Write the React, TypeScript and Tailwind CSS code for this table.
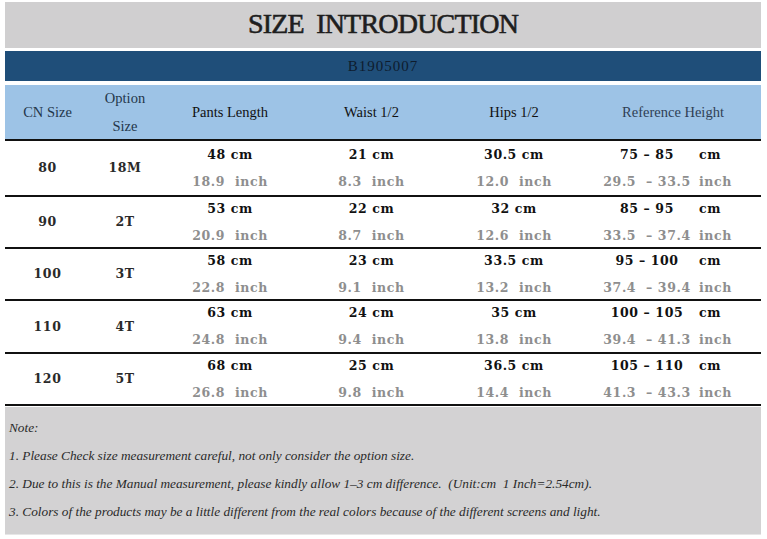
import React from 'react';

interface Row {
  cn: string;
  opt: string;
  h: string;
  pants: [string, string];
  waist: [string, string];
  hips: [string, string];
  height: [string, string, string, string];
}

const rows: Row[] = [
  { cn: '80', opt: '18M', h: 'h-[56px]', pants: ['48 cm', '18.9  inch'], waist: ['21 cm', '8.3  inch'], hips: ['30.5 cm', '12.0  inch'], height: ['75 – 85', 'cm', '29.5  – 33.5', 'inch'] },
  { cn: '90', opt: '2T', h: 'h-[52px]', pants: ['53 cm', '20.9  inch'], waist: ['22 cm', '8.7  inch'], hips: ['32 cm', '12.6  inch'], height: ['85 – 95', 'cm', '33.5  – 37.4', 'inch'] },
  { cn: '100', opt: '3T', h: 'h-[52px]', pants: ['58 cm', '22.8  inch'], waist: ['23 cm', '9.1  inch'], hips: ['33.5 cm', '13.2  inch'], height: ['95 – 100', 'cm', '37.4  – 39.4', 'inch'] },
  { cn: '110', opt: '4T', h: 'h-[53px]', pants: ['63 cm', '24.8  inch'], waist: ['24 cm', '9.4  inch'], hips: ['35 cm', '13.8  inch'], height: ['100 – 105', 'cm', '39.4  – 41.3', 'inch'] },
  { cn: '120', opt: '5T', h: 'h-[52px]', pants: ['68 cm', '26.8  inch'], waist: ['25 cm', '9.8  inch'], hips: ['36.5 cm', '14.4  inch'], height: ['105 – 110', 'cm', '41.3  – 43.3', 'inch'] },
];

const cols = 'grid grid-cols-[85px_70px_140px_143px_142px_176px]';

const Pair: React.FC<{ v: [string, string] }> = ({ v }) => (
  <div className="flex flex-col items-center justify-center gap-[11px] whitespace-pre">
    <span className="text-[#111]">{v[0]}</span>
    <span className="text-[#8e8e8e]">{v[1]}</span>
  </div>
);

export default function App() {
  return (
    <div className="w-[767px] h-[539px] bg-white pt-[2px] px-[5px] overflow-hidden">
      <div className="w-[756px]">
        {/* Title */}
        <div className="h-[46px] bg-[#d0cfd0] flex items-center justify-center">
          <h1 className="font-['Liberation_Serif',serif] text-[28px] leading-none text-[#1e1e1e] whitespace-pre tracking-[-0.8px] [-webkit-text-stroke:0.6px_#1e1e1e] -mt-[3px]">
            SIZE  INTRODUCTION
          </h1>
        </div>

        {/* Item code */}
        <div className="mt-[3px] h-[30px] bg-[#1f4e79] flex items-center justify-center font-['Liberation_Serif',serif] text-[15px] tracking-[1px] text-[#0e1c2e]">
          B1905007
        </div>

        {/* Header */}
        <div className={`${cols} mt-[4px] h-[56px] bg-[#9dc3e6] border-b-[2px] border-[#111] font-['Liberation_Serif',serif] text-[14.5px] text-[#24364a] items-center text-center`}>
          <div>CN Size</div>
          <div className="flex flex-col leading-[28px] -mt-[1px]">
            <span>Option</span>
            <span>Size</span>
          </div>
          <div className="text-[#111]">Pants Length</div>
          <div className="text-[#111]">Waist 1/2</div>
          <div className="text-[#111]">Hips 1/2</div>
          <div className="text-[#2f3f55]">Reference Height</div>
        </div>

        {/* Rows */}
        <div className="font-['DejaVu_Serif',serif] font-bold text-[12.5px] leading-[16px] tracking-[0.6px]">
          {rows.map((r) => (
            <div key={r.cn} className={`${cols} ${r.h} border-b-[2px] border-[#111] items-center text-center`}>
              <div className="text-[#2a2a2a]">{r.cn}</div>
              <div className="text-[#2a2a2a]">{r.opt}</div>
              <Pair v={r.pants} />
              <Pair v={r.waist} />
              <Pair v={r.hips} />
              <div className="grid grid-cols-[96px_auto] gap-x-[4px] gap-y-[11px] pl-[14px] whitespace-pre">
                <span className="text-center text-[#111]">{r.height[0]}</span>
                <span className="text-left text-[#111]">{r.height[1]}</span>
                <span className="text-center text-[#8e8e8e]">{r.height[2]}</span>
                <span className="text-left text-[#8e8e8e]">{r.height[3]}</span>
              </div>
            </div>
          ))}
        </div>

        {/* Notes */}
        <div className="mt-[1px] h-[128px] bg-[#d3d2d3] border-b border-[#e6e6e6] pl-[4px] pt-[12px] font-['Liberation_Serif',serif] italic text-[13.3px] text-[#2a2a2a] flex flex-col gap-[11px] leading-[17px]">
          <p>Note:</p>
          <p>1. Please Check size measurement careful, not only consider the option size.</p>
          <p className="whitespace-pre">2. Due to this is the Manual measurement, please kindly allow 1–3 cm difference.  (Unit:cm  1 Inch=2.54cm).</p>
          <p>3. Colors of the products may be a little different from the real colors because of the different screens and light.</p>
        </div>
      </div>
    </div>
  );
}
